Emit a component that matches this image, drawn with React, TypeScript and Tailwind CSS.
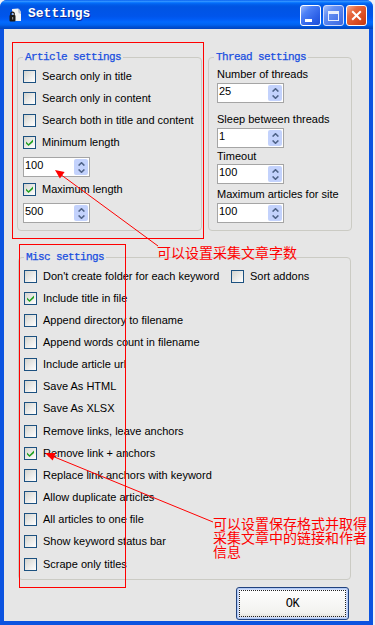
import React from "react";

function Check({ on = false }: { on?: boolean }) {
  return (
    <span className="flex h-[13px] w-[13px] shrink-0 items-center justify-center border border-[#1c5180] bg-[linear-gradient(135deg,#d4d4ce_0%,#ececea_55%,#ffffff_100%)]">
      {on && (
        <svg width="7" height="7" viewBox="0 0 7 7">
          <path d="M0 2.5 2.5 5 7 0.5V3L2.5 7 0 4.5Z" fill="#21a121" />
        </svg>
      )}
    </span>
  );
}

function Row({
  label,
  on = false,
  className = "",
}: {
  label: string;
  on?: boolean;
  className?: string;
}) {
  return (
    <div className={"flex h-[22px] items-center gap-[6px] " + className}>
      <Check on={on} />
      <span className="whitespace-nowrap leading-[14px]">{label}</span>
    </div>
  );
}

function Spin({ value, className = "" }: { value: string; className?: string }) {
  return (
    <div className={"flex h-[20px] w-[67px] border border-[#a5a5a5] bg-white " + className}>
      <span className="flex-1 pl-[1px] text-[11px] leading-[14px]">{value}</span>
      <span className="my-[1px] mr-[1px] flex w-[14px] flex-col items-center justify-center gap-[3px] rounded-[2px] bg-[#c3d2fc]">
        <svg width="7" height="4" viewBox="0 0 7 4">
          <path d="M0.6 3.6 3.5 0.7 6.4 3.6" stroke="#4f6388" strokeWidth="1.5" fill="none" />
        </svg>
        <svg width="7" height="4" viewBox="0 0 7 4">
          <path d="M0.6 0.4 3.5 3.3 6.4 0.4" stroke="#4f6388" strokeWidth="1.5" fill="none" />
        </svg>
      </span>
    </div>
  );
}

function Label({ text, className = "" }: { text: string; className?: string }) {
  return <div className={"whitespace-nowrap leading-[14px] " + className}>{text}</div>;
}

export default function App() {
  return (
    <div className="relative flex h-[625px] w-[375px] bg-[#eef1f8] font-['Liberation_Sans',Arial,sans-serif] text-[11px] text-black">
      {/* window */}
      <div className="flex h-[625px] w-[373px] flex-col rounded-t-[7px] bg-[#0b53e0]">
        <div className="flex h-[29px] items-start rounded-t-[7px] bg-[linear-gradient(180deg,#0058ee_0%,#3593ff_4%,#288eff_6%,#127dff_8%,#036ffc_10%,#0262ee_14%,#0057e5_20%,#0054e3_24%,#0055eb_56%,#005bf5_66%,#026afe_76%,#0062ef_86%,#0052d6_92%,#0045c0_100%)] pl-[9px] pr-[6px]">
          <svg className="mt-[8px]" width="13" height="14" viewBox="0 0 13 14">
            <path d="M3 1 L9 0.5 Q12 2 12 6 L12 13 L4 13 Z" fill="#f4f4f4" />
            <path d="M9 0.5 Q12 2 12 6 L9.5 5 Z" fill="#b9c3d6" />
            <rect x="0.5" y="7" width="6" height="6.5" rx="1" fill="#1a1a1a" />
            <path d="M1.8 7 V5.2 Q3.5 3.2 5.2 5.2 V7" stroke="#1a1a1a" strokeWidth="1.2" fill="none" />
            <rect x="3" y="9" width="1.2" height="2.5" fill="#8a8a8a" />
          </svg>
          <span className="ml-[6px] mt-[6px] font-['Liberation_Mono',monospace] text-[13px] font-bold leading-[16px] text-white [text-shadow:1px_1px_0_#0a2a9a]">
            Settings
          </span>
          <div className="ml-auto mt-[5px] flex gap-[2px]">
            <div className="relative h-[21px] w-[21px] rounded-[3px] border border-white bg-[linear-gradient(135deg,#9ab8fb_0%,#4d80f6_30%,#2c60e7_70%,#1e4fd6_100%)]">
              <span className="absolute left-[4px] top-[13px] h-[3px] w-[7px] bg-white" />
            </div>
            <div className="flex h-[21px] w-[21px] items-center justify-center rounded-[3px] border border-[#d3ddfb] bg-[linear-gradient(135deg,#a6bff9_0%,#6690f3_30%,#4b78ea_70%,#3d68dd_100%)]">
              <span className="h-[10px] w-[11px] border border-t-[3px] border-[#e8eefc]" />
            </div>
            <div className="flex h-[21px] w-[21px] items-center justify-center rounded-[3px] border border-white bg-[linear-gradient(135deg,#f7ad90_0%,#e7693f_30%,#d94a20_70%,#c43a12_100%)]">
              <svg width="11" height="11" viewBox="0 0 11 11">
                <path d="M1.2 1.2 9.8 9.8 M9.8 1.2 1.2 9.8" stroke="#fff" strokeWidth="2" />
              </svg>
            </div>
          </div>
        </div>

        <div className="flex flex-1 flex-col px-[4px] pb-[4px]">
          <div className="flex flex-1 flex-col bg-[#e6e6e6] pl-[13px] pt-[21px]">
            <div className="flex items-start gap-[6px]">
              <fieldset className="w-[185px] min-w-0 rounded-[4px] border border-[#cbcbc4] pl-[5px] pb-[7px] pt-[1px]">
                <legend className="px-[2px] font-['Liberation_Mono',monospace] text-[11px] leading-[14px] tracking-[-0.6px] text-[#1a4fe0] [-webkit-text-stroke:0.25px_#1a4fe0]">
                  Article settings
                </legend>
                <Row label="Search only in title" />
                <Row label="Search only in content" />
                <Row label="Search both in title and content" />
                <Row label="Minimum length" on />
                <Spin value="100" className="mt-[4px]" />
                <Row label="Maximum length" on className="mt-[1px]" />
                <Spin value="500" className="mt-[3px]" />
              </fieldset>

              <fieldset className="w-[144px] min-w-0 rounded-[4px] border border-[#cbcbc4] pl-[8px] pb-[7px]">
                <legend className="ml-[-3px] px-[2px] font-['Liberation_Mono',monospace] text-[11px] leading-[14px] tracking-[-0.6px] text-[#1a4fe0] [-webkit-text-stroke:0.25px_#1a4fe0]">
                  Thread settings
                </legend>
                <Label text="Number of threads" className="mt-[3px]" />
                <Spin value="25" className="mt-[2px]" />
                <Label text="Sleep between threads" className="mt-[9px]" />
                <Spin value="1" className="mt-[2px]" />
                <Label text="Timeout" className="mt-[1px]" />
                <Spin value="100" className="mt-[1px]" />
                <Label text="Maximum articles for site" className="mt-[3px]" />
                <Spin value="100" className="mt-[2px]" />
              </fieldset>
            </div>

            <fieldset className="ml-[1px] mt-[19px] w-[333px] min-w-0 rounded-[4px] border border-[#cbcbc4] pl-[5px] pb-[4px] pt-[1px]">
              <legend className="px-[2px] font-['Liberation_Mono',monospace] text-[11px] leading-[14px] tracking-[-0.6px] text-[#1a4fe0] [-webkit-text-stroke:0.25px_#1a4fe0]">
                Misc settings
              </legend>
              <div className="flex">
                <Row label="Don't create folder for each keyword" className="w-[207px]" />
                <Row label="Sort addons" />
              </div>
              <Row label="Include title in file" on />
              <Row label="Append directory to filename" />
              <Row label="Append words count in filename" />
              <Row label="Include article url" />
              <Row label="Save As HTML" />
              <Row label="Save As XLSX" />
              <Row label="Remove links, leave anchors" className="mt-[1px]" />
              <Row label="Remove link + anchors" on />
              <Row label="Replace link anchors with keyword" />
              <Row label="Allow duplicate articles" />
              <Row label="All articles to one file" />
              <Row label="Show keyword status bar" />
              <Row label="Scrape only titles" className="mt-[1px]" />
            </fieldset>

            <button className="ml-[219px] mt-[7px] h-[33px] w-[113px] rounded-[3px] border border-[#21427e] bg-[linear-gradient(180deg,#ffffff_0%,#f2f2ef_80%,#dedbd2_100%)] p-[2px] shadow-[inset_0_0_0_1px_#b3cbf6,inset_0_0_0_2px_#cfdcfa]">
              <span className="flex h-full w-full items-center justify-center border border-dotted border-[#222] font-['Liberation_Mono',monospace] text-[12px] tracking-[-0.5px]">
                OK
              </span>
            </button>
          </div>
        </div>
      </div>

      {/* annotations */}
      <div className="pointer-events-none absolute left-[12px] top-[42px] h-[197px] w-[192px] border border-[#ff0000]" />
      <div className="pointer-events-none absolute left-[19px] top-[244px] h-[344px] w-[107px] border border-[#ff0000]" />
      <svg className="pointer-events-none absolute left-0 top-0" width="375" height="625" viewBox="0 0 375 625">
        <line x1="158" y1="246" x2="60" y2="174" stroke="#ff0000" strokeWidth="1" />
        <polygon points="55,170 59.9,178.5 64.6,172.1" fill="#ff0000" />
        <line x1="213" y1="522" x2="52" y2="456" stroke="#ff0000" strokeWidth="1" />
        <polygon points="45,453 52.7,460.5 55.8,453.1" fill="#ff0000" />
      </svg>
      <div className="pointer-events-none absolute left-[157px] top-[245px] whitespace-nowrap font-['Noto_Sans_CJK_SC',sans-serif] text-[14px] leading-[14px] text-[#ff0000]">
        可以设置采集文章字数
      </div>
      <div className="pointer-events-none absolute left-[213px] top-[516px] w-[156px] font-['Noto_Sans_CJK_SC',sans-serif] text-[14px] leading-[14px] text-[#ff0000]">
        可以设置保存格式并取得采集文章中的链接和作者信息
      </div>
    </div>
  );
}
